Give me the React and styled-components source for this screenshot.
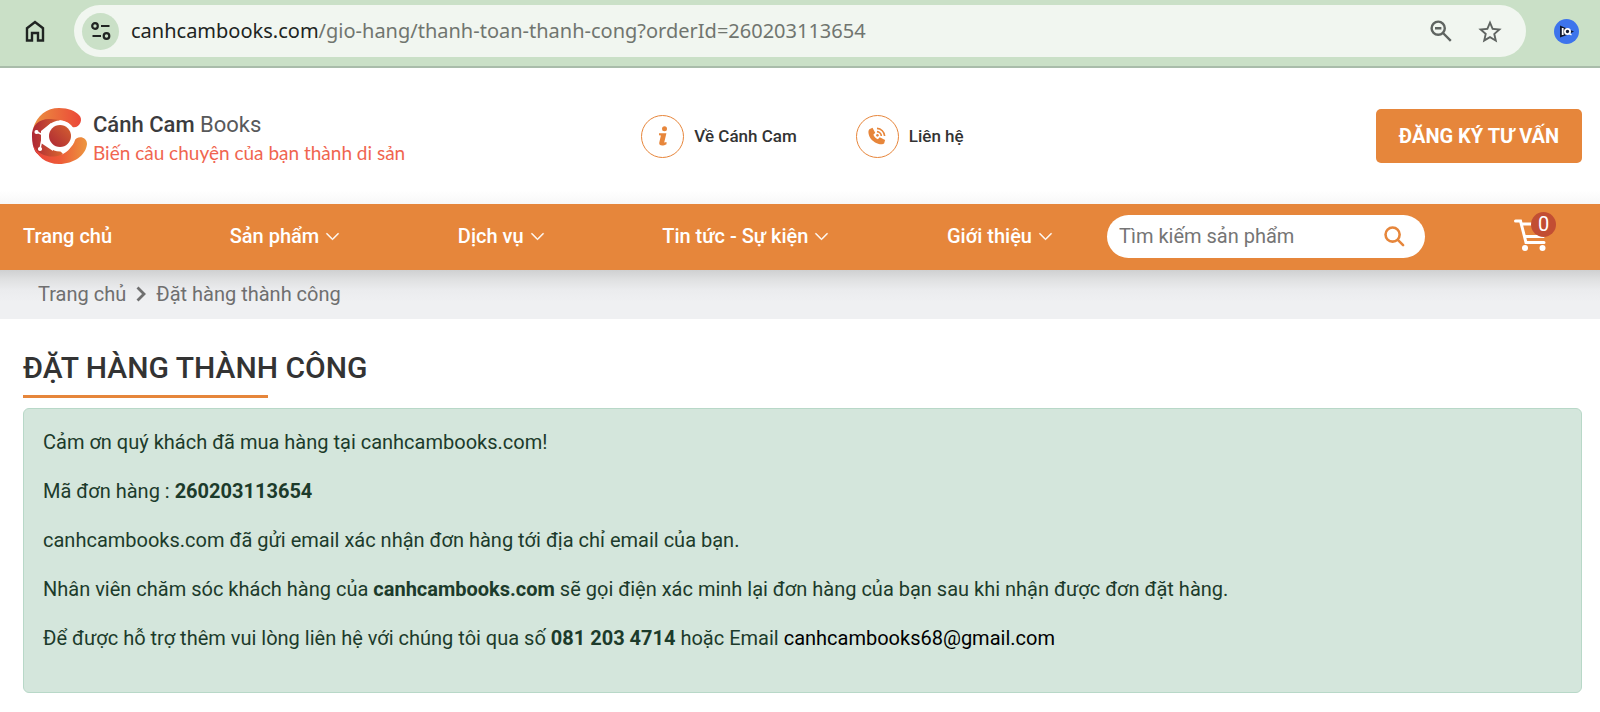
import styled, { createGlobalStyle } from "styled-components";
import { MdOutlineStarBorder } from "react-icons/md";
import { BsChevronDown } from "react-icons/bs";

const GlobalStyle = createGlobalStyle`
  * {
    box-sizing: border-box;
  }
  body {
    margin: 0;
    background: #ffffff;
    color: #333333;
    font-family: Roboto, "Liberation Sans", sans-serif;
    font-size: 20px;
    line-height: 24px;
  }
  a {
    color: inherit;
    text-decoration: none;
  }
  button {
    border: 0;
    padding: 0;
    background: none;
    color: inherit;
    font: inherit;
    cursor: pointer;
  }
  svg {
    display: block;
    flex: none;
  }
`;

const BrowserBar = styled.div`
  display: flex;
  align-items: center;
  height: 68px;
  padding: 0 21px 4px 22px;
  background: #cae0c7;
  border-bottom: 2px solid #a9bcaa;
`;

const ToolButton = styled.button`
  display: grid;
  place-items: center;
  width: 26px;
  height: 26px;
  color: ${({ $color }) => $color || "#202422"};
`;

const AddressBar = styled.div`
  display: flex;
  flex: 1;
  align-items: center;
  gap: 22px;
  height: 52px;
  margin: 0 27px 0 26px;
  padding: 0 24px 0 8px;
  border-radius: 26px;
  background: #f1f6f0;
`;

const SiteInfo = styled(ToolButton)`
  width: 37px;
  height: 37px;
  border-radius: 50%;
  background: #cae0c7;
`;

const Url = styled.div`
  flex: 1;
  margin-left: -10px;
  font-family: "Noto Sans", "Open Sans", sans-serif;
  font-size: 20px;
  color: #70756f;
  span {
    color: #202422;
  }
`;

const Header = styled.header`
  display: grid;
  grid-template-columns: 1fr auto 1fr;
  align-items: center;
  height: 136px;
  padding: 0 18px 0 23px;
  background: linear-gradient(#ffffff 90%, #f8f8f8);
`;

const Brand = styled.a`
  display: flex;
  align-items: center;
  gap: 6px;
  padding-left: 8px;
`;

const BrandText = styled.div`
  padding-top: 6px;
`;

const BrandName = styled.div`
  font-size: 22px;
  line-height: 28px;
  color: #58595b;
  strong {
    font-weight: 500;
    color: #3b3b3d;
  }
`;

const Slogan = styled.div`
  font-family: Lato, "Open Sans", sans-serif;
  font-size: 19px;
  line-height: 28px;
  color: #f0654f;
`;

const QuickLinks = styled.div`
  display: flex;
  gap: 59px;
`;

const QuickLink = styled.a`
  display: flex;
  align-items: center;
  gap: 10px;
  font-size: 17px;
  font-weight: 500;
`;

const Ring = styled.span`
  display: grid;
  place-items: center;
  width: 43px;
  height: 43px;
  border: 1px solid #e7863b;
  border-radius: 50%;
  color: #e7863b;
`;

const ConsultButton = styled.button`
  justify-self: end;
  width: 206px;
  height: 54px;
  border-radius: 5px;
  background: #e6863b;
  color: #ffffff;
  font-weight: 700;
`;

const Nav = styled.nav`
  display: flex;
  align-items: center;
  height: 66px;
  padding: 0 44px 2px 23px;
  background: #e6863b;
  color: #ffffff;
`;

const Menu = styled.div`
  display: flex;
  flex: 1;
  justify-content: space-between;
  margin-right: 54px;
`;

const MenuLink = styled.a`
  display: flex;
  align-items: center;
  gap: 6px;
  font-weight: 500;
`;

const Search = styled.form`
  display: flex;
  align-items: center;
  width: 318px;
  height: 43px;
  padding: 0 20px 0 12px;
  border-radius: 22px;
  background: #ffffff;
  color: #e6863b;
`;

const SearchInput = styled.input`
  flex: 1;
  min-width: 0;
  border: 0;
  padding: 0;
  outline: 0;
  background: none;
  font: inherit;
  &::placeholder {
    color: #757575;
    opacity: 1;
  }
`;

const Cart = styled.a`
  position: relative;
  margin-left: 89px;
  padding: 0 10px 2px 0;
`;

const CartCount = styled.span`
  position: absolute;
  top: -7px;
  right: 0;
  width: 25px;
  height: 25px;
  border-radius: 50%;
  background: #c24e33;
  line-height: 25px;
  text-align: center;
`;

const Breadcrumb = styled.div`
  display: flex;
  align-items: center;
  gap: 10px;
  height: 49px;
  padding: 0 38px 2px;
  background: linear-gradient(#cfd0d1, #e0e1e2 10px, #ebecee 20px, #eff0f2 32px);
  color: #6f6f6f;
`;

const Main = styled.main`
  padding: 29px 18px 19px 23px;
`;

const Title = styled.h1`
  margin: 0 0 10px;
  font-size: 30px;
  font-weight: 500;
  line-height: 40px;
  &::after {
    content: "";
    display: block;
    width: 245px;
    height: 3px;
    margin-top: 7px;
    background: #e6863b;
  }
`;

const Notice = styled.section`
  padding: 18px 19px 39px;
  border: 1px solid #b8d8c8;
  border-radius: 6px;
  background: #d4e6dc;
  color: #1c3b2b;
  a {
    color: #000000;
  }
`;

const Line = styled.p`
  margin: 0 0 19px;
  line-height: 30px;
  &:last-child {
    margin-bottom: 0;
  }
`;

const menu = [
  { label: "Trang chủ" },
  { label: "Sản phẩm", more: true },
  { label: "Dịch vụ", more: true },
  { label: "Tin tức - Sự kiện", more: true },
  { label: "Giới thiệu", more: true },
];

const HomeIcon = () => (
  <svg width="20" height="22" viewBox="0 0 20 22" fill="none" stroke="currentColor" strokeWidth="2.4">
    <path d="M2 8.2 10 2l8 6.200V20.500h-5V13H7v7.500H2z" />
  </svg>
);

const TuneIcon = () => (
  <svg width="20" height="18" viewBox="0 0 20 18" fill="none" stroke="currentColor" strokeWidth="2.2">
    <circle cx="4" cy="4" r="2.800" />
    <path d="M10 4h8.500M1.500 14H10" />
    <circle cx="15.500" cy="14" r="2.800" />
  </svg>
);

const ZoomOutIcon = () => (
  <svg width="22" height="22" viewBox="0 0 22 22" fill="none" stroke="currentColor" strokeWidth="2.4">
    <circle cx="8.200" cy="8.200" r="6.600" />
    <path d="M5 8.200h6.400M13 13l7.800 7.800" />
  </svg>
);

const ExtensionIcon = () => (
  <svg width="25" height="25" viewBox="0 0 25 25">
    <circle cx="12.500" cy="12.500" r="12.500" fill="#3d74ec" />
    <path d="M6 6.500v12l7-2.500 7-3.500-7-3z" fill="#10182e" />
    <path d="M8.700 9v7" stroke="#fff" strokeWidth="1.800" />
    <circle cx="13.500" cy="12.500" r="2.600" fill="#10182e" stroke="#fff" strokeWidth="1.800" />
    <path d="M14.500 14l3 2" stroke="#fff" strokeWidth="1.400" />
  </svg>
);

const Logo = () => (
  <svg width="56" height="58" viewBox="0 0 56 58">
    <defs>
      <linearGradient id="top" x1="0" x2="1">
        <stop offset="0" stopColor="#eb9140" />
        <stop offset="1" stopColor="#eb4738" />
      </linearGradient>
      <linearGradient id="left" x1="1" y1="0" x2="0" y2="1">
        <stop offset="0" stopColor="#d4612f" />
        <stop offset="1" stopColor="#ad2735" />
      </linearGradient>
      <linearGradient id="wing" x1="0" x2="1">
        <stop offset="0" stopColor="#ad2735" />
        <stop offset="1" stopColor="#d9662f" />
      </linearGradient>
      <linearGradient id="bottom" x1="0" x2="1">
        <stop offset="0" stopColor="#e9433a" />
        <stop offset=".5" stopColor="#ed5b38" />
        <stop offset="1" stopColor="#ec963f" />
      </linearGradient>
    </defs>
    <path d="M2 22C6 8 16 1 28 1c10 0 16 3 20 7 5 5 0 14-7 12-4-5-9-7-15-7-10 0-18 3-24 9z" fill="url(#top)" />
    <path d="M1 30C0 17 10 11 20 12l9 1-15 15 18 19C22 54 9 52 4 44 2 40 1 35 1 30z" fill="url(#wing)" />
    <path d="M2 38c6 12 20 14 30 9 6-3 8-7 11-13 3-6 13-5 13 3-1 11-13 20-28 20C15 57 5 49 2 38z" fill="url(#bottom)" />
    <path d="M20 16l-10 8v12l12 8z" fill="#fff" />
    <circle cx="29" cy="29" r="15.500" fill="#fff" />
    <circle cx="29" cy="29" r="11" fill="url(#left)" />
    <g fill="#fff" stroke="#fff" strokeWidth="1.400">
      <path d="M5.500 25l7 3M9 42l2-10" fill="none" />
      <circle cx="5.500" cy="25" r="1.400" />
      <circle cx="9" cy="42" r="1.400" />
    </g>
  </svg>
);

const InfoIcon = () => (
  <svg width="12" height="20" viewBox="0 0 12 20" fill="currentColor">
    <circle cx="7.500" cy="2.700" r="2.500" />
    <path d="M2 7.200h7.400L7.200 16.500l2.300-.6v2.300C6 20.300 1.500 20 2.300 16.500L3.900 9.600 2 9.300z" />
  </svg>
);

const PhoneIcon = () => (
  <svg width="18" height="18" viewBox="0 0 20 20" fill="none" stroke="currentColor" strokeWidth="1.800">
    <path d="M1.500 2.500 5 .8 8 6.500 6 8.500c1 2.300 2.700 4 5 5l2-2 6 3L18 18c-1 1.500-4 1.500-6 .8C6 17 2 13 .8 8 .3 5.500.3 3.800 1.500 2.500z" fill="currentColor" stroke="none" />
    <path d="M10 1.500A9 9 0 0 1 18.500 10M10 5.200a5 5 0 0 1 4.800 4.800" />
    <circle cx="10.500" cy="9.300" r="1.400" fill="currentColor" stroke="none" />
  </svg>
);

const SearchIcon = () => (
  <svg width="21" height="21" viewBox="0 0 22 22" fill="none" stroke="currentColor" strokeWidth="2.700" strokeLinecap="round">
    <circle cx="9" cy="9" r="7.400" />
    <path d="M14.500 14.500l5.500 5.500" />
  </svg>
);

const CartIcon = () => (
  <svg width="32" height="32" viewBox="0 0 32 32" fill="none" stroke="currentColor" strokeWidth="3" strokeLinecap="round">
    <path d="M1.500 2H6.500L12 23.500H30M7.500 5H29M10.500 17.500H29L30 14" />
    <circle cx="11" cy="29" r="3" fill="currentColor" stroke="none" />
    <circle cx="28.500" cy="29" r="3" fill="currentColor" stroke="none" />
  </svg>
);

const BreadcrumbArrow = () => (
  <svg width="10" height="16" viewBox="0 0 10 16" fill="none" stroke="currentColor" strokeWidth="2.800">
    <path d="M1.500 1.500 8 8l-6.500 6.500" />
  </svg>
);

const App = () => {
  return (
    <>
      <GlobalStyle />
      <BrowserBar>
        <ToolButton aria-label="Home">
          <HomeIcon />
        </ToolButton>
        <AddressBar>
          <SiteInfo aria-label="Site information">
            <TuneIcon />
          </SiteInfo>
          <Url>
            <span>canhcambooks.com</span>/gio-hang/thanh-toan-thanh-cong?orderId=260203113654
          </Url>
          <ToolButton aria-label="Zoom" $color="#5f6461">
            <ZoomOutIcon />
          </ToolButton>
          <ToolButton aria-label="Bookmark" $color="#5f6461">
            <MdOutlineStarBorder size={28} />
          </ToolButton>
        </AddressBar>
        <ToolButton aria-label="Extension">
          <ExtensionIcon />
        </ToolButton>
      </BrowserBar>

      <Header>
        <Brand href="#home">
          <Logo />
          <BrandText>
            <BrandName>
              <strong>Cánh Cam</strong> Books
            </BrandName>
            <Slogan>Biến câu chuyện của bạn thành di sản</Slogan>
          </BrandText>
        </Brand>
        <QuickLinks>
          <QuickLink href="#about">
            <Ring>
              <InfoIcon />
            </Ring>
            Về Cánh Cam
          </QuickLink>
          <QuickLink href="#contact">
            <Ring>
              <PhoneIcon />
            </Ring>
            Liên hệ
          </QuickLink>
        </QuickLinks>
        <ConsultButton>ĐĂNG KÝ TƯ VẤN</ConsultButton>
      </Header>

      <Nav>
        <Menu>
          {menu.map((item) => (
            <MenuLink href="#menu" key={item.label}>
              {item.label}
              {item.more && <BsChevronDown size={15} strokeWidth="0.6" />}
            </MenuLink>
          ))}
        </Menu>
        <Search>
          <SearchInput type="text" placeholder="Tìm kiếm sản phẩm" aria-label="Tìm kiếm sản phẩm" />
          <button type="button" aria-label="Tìm kiếm">
            <SearchIcon />
          </button>
        </Search>
        <Cart href="#cart">
          <CartIcon />
          <CartCount>0</CartCount>
        </Cart>
      </Nav>

      <Breadcrumb>
        <a href="#home">Trang chủ</a>
        <BreadcrumbArrow />
        <span>Đặt hàng thành công</span>
      </Breadcrumb>

      <Main>
        <Title>ĐẶT HÀNG THÀNH CÔNG</Title>
        <Notice>
          <Line>Cảm ơn quý khách đã mua hàng tại canhcambooks.com!</Line>
          <Line>
            Mã đơn hàng : <strong>260203113654</strong>
          </Line>
          <Line>canhcambooks.com đã gửi email xác nhận đơn hàng tới địa chỉ email của bạn.</Line>
          <Line>
            Nhân viên chăm sóc khách hàng của <strong>canhcambooks.com</strong> sẽ gọi điện xác minh lại đơn hàng
            của bạn sau khi nhận được đơn đặt hàng.
          </Line>
          <Line>
            Để được hỗ trợ thêm vui lòng liên hệ với chúng tôi qua số <strong>081 203 4714</strong> hoặc Email{" "}
            <a href="mailto:canhcambooks68@gmail.com">canhcambooks68@gmail.com</a>
          </Line>
        </Notice>
      </Main>
    </>
  );
};

export default App;
